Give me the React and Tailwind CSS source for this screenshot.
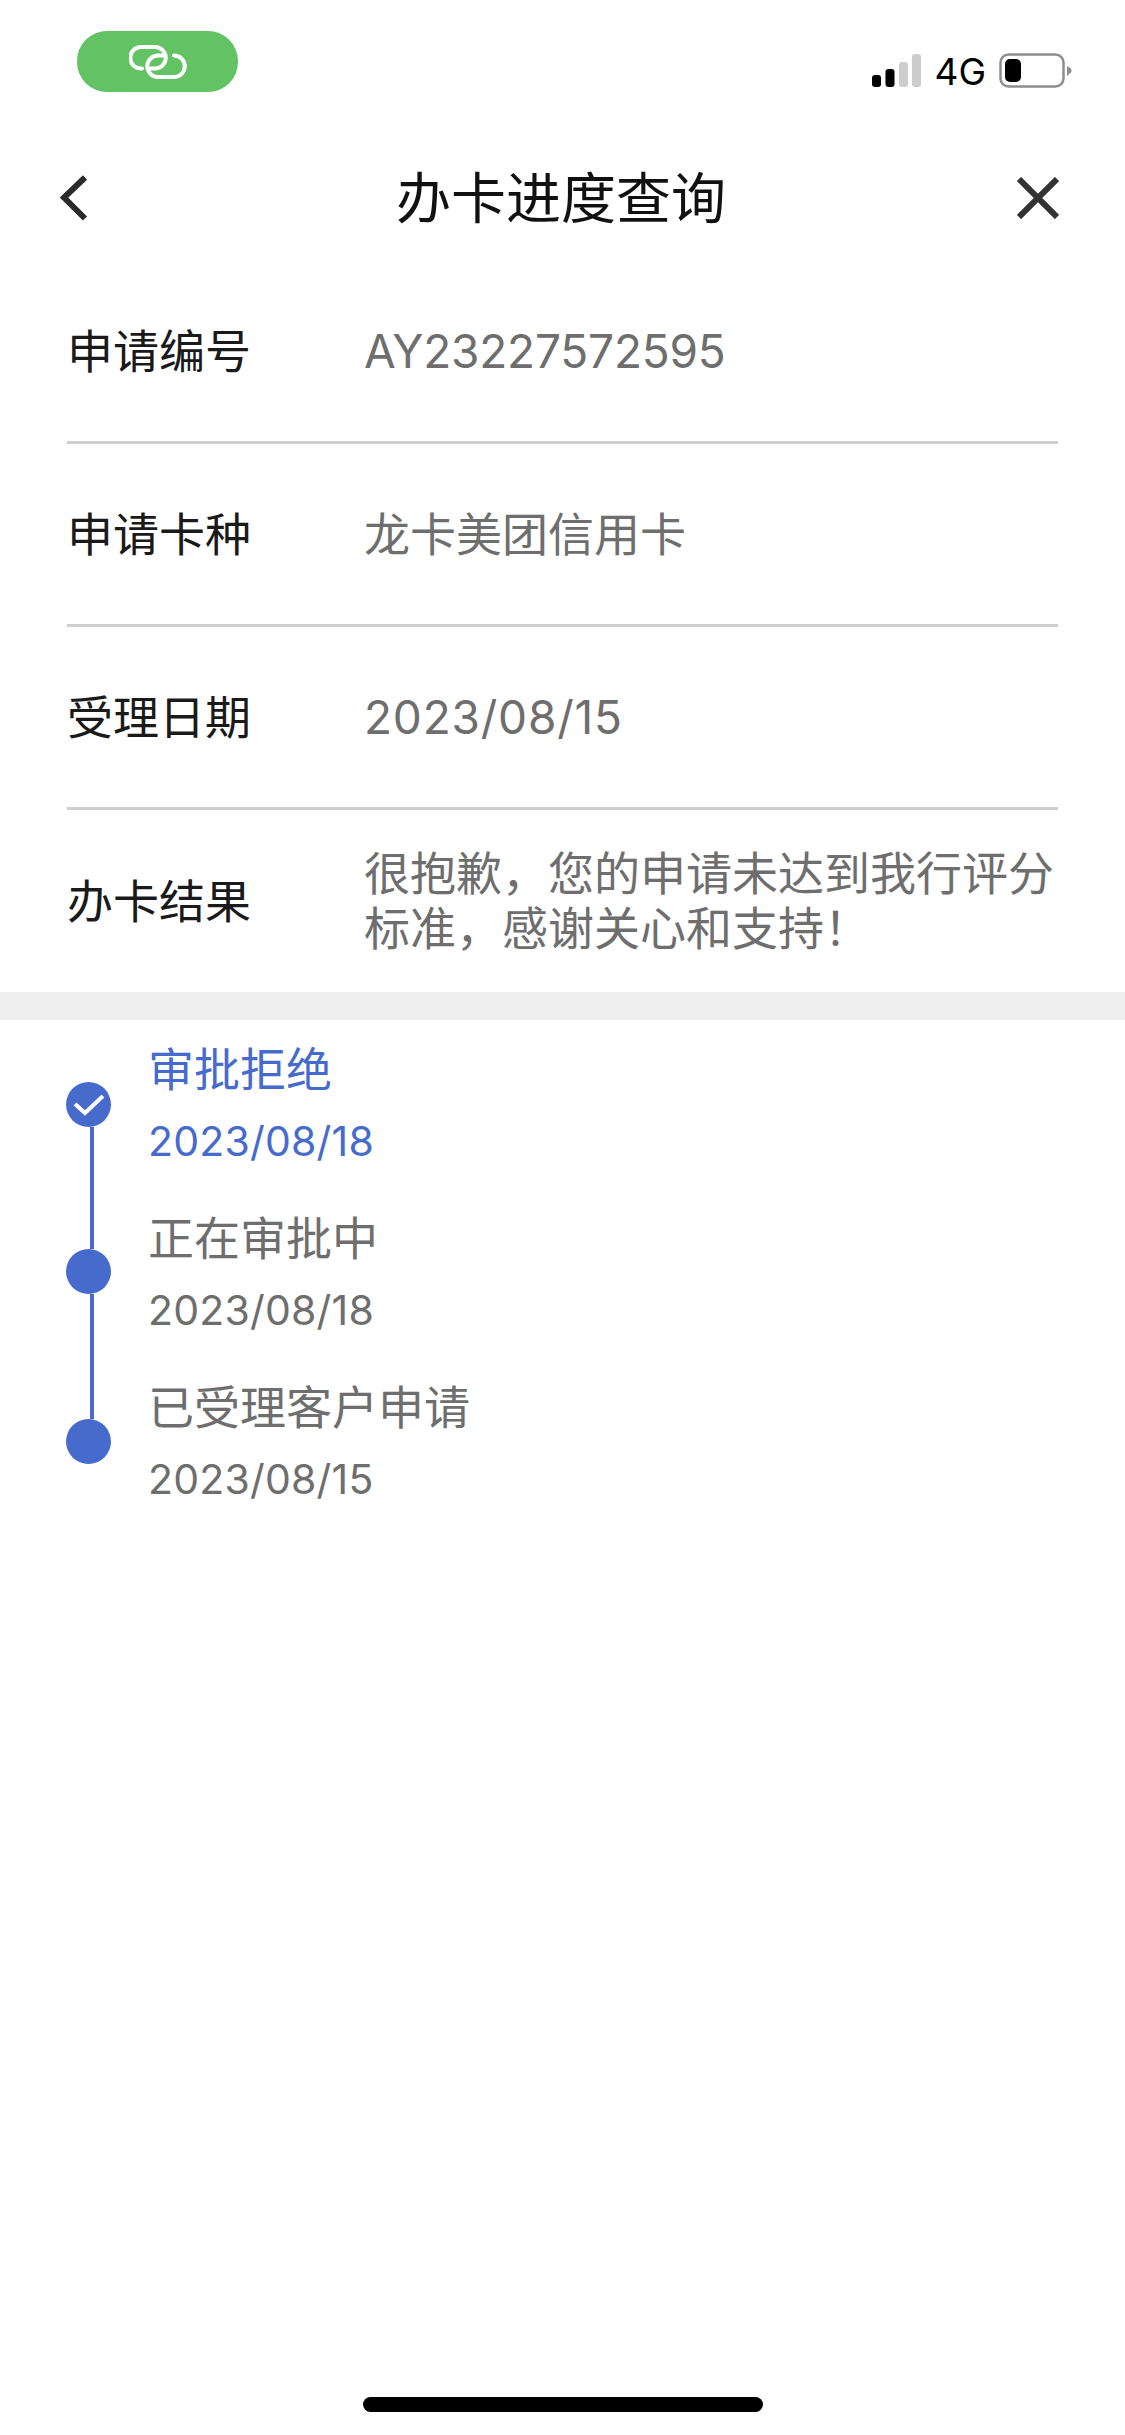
const cjk = "font-['Inter','Noto_Sans_CJK_SC',sans-serif]";

function LinkIcon() {
  return (
    <svg width="58" height="34" viewBox="0 0 58 34" fill="none" stroke="#fff" strokeWidth="4" strokeLinecap="round">
      <path d="M13 23.5H12A10.7 10.7 0 0 1 12 2H26A10.7 10.7 0 0 1 26 23.5H21" />
      <path d="M45 10.5A10.7 10.7 0 0 1 45 32H29A10.7 10.7 0 0 1 29 10.5H35" />
    </svg>
  );
}

function Signal() {
  return (
    <svg width="49" height="34" viewBox="0 0 49 34">
      <rect x="0" y="21" width="9" height="12" rx="3" fill="#000" />
      <rect x="13.500" y="15" width="9" height="18" rx="3" fill="#000" />
      <rect x="27" y="8" width="9" height="25" rx="3" fill="#cdcdcd" />
      <rect x="40" y="0" width="9" height="33" rx="3" fill="#cdcdcd" />
    </svg>
  );
}

function Battery() {
  return (
    <svg width="73" height="36" viewBox="0 0 73 36">
      <rect x="1.500" y="1.500" width="63" height="32" rx="8" fill="none" stroke="#8e8e8e" strokeWidth="2.500" />
      <rect x="6" y="6" width="16" height="23" rx="5" fill="#000" />
      <path d="M68 13L72 15.500Q73 17.500 72 19.500L68 23Z" fill="#8e8e8e" />
    </svg>
  );
}

function InfoRow({ label, value, last, valueClass = "" }) {
  return (
    <div className={`flex items-center ${last ? "h-[182px]" : "h-[183px] border-b-[3px] border-[#cfcfcf]"}`}>
      <div className="w-[297px] shrink-0 text-[#1a1a1a]">{label}</div>
      <div className={`text-[#6e6e6e] leading-[55px] ${valueClass}`}>{value}</div>
    </div>
  );
}

export default function App() {
  const rows = [
    { label: "申请编号", value: "AY23227572595", valueClass: "tracking-[-0.2px]" },
    { label: "申请卡种", value: "龙卡美团信用卡" },
    { label: "受理日期", value: "2023/08/15", valueClass: "tracking-[0.8px]" },
  ];
  const steps = [
    { title: "审批拒绝", date: "2023/08/18", active: true },
    { title: "正在审批中", date: "2023/08/18" },
    { title: "已受理客户申请", date: "2023/08/15" },
  ];

  return (
    <div className={`h-[2435px] bg-white flex flex-col overflow-hidden ${cjk}`}>
      {/* status bar */}
      <div className="flex justify-between pl-[77px] pr-[53px] pt-[31px]">
        <div className="w-[161px] h-[61px] rounded-[30px] bg-[#62c264] flex items-center justify-center">
          <LinkIcon />
        </div>
        <div className="flex items-center gap-[13px] h-[34px] mt-[23px]">
          <Signal />
          <span className="text-[37px] leading-none text-black">4G</span>
          <Battery />
        </div>
      </div>

      {/* nav */}
      <div className="flex items-center justify-between h-[84px] mt-[64px] pl-[60px] pr-[66px]">
        <div className="w-[42px]">
          <svg width="28" height="46" viewBox="0 0 28 46" fill="none" stroke="#2b2b2b" strokeWidth="6">
            <path d="M25 2.500L4 22.500L25 43.500" />
          </svg>
        </div>
        <div className="text-[55px] text-[#111] ml-[3px]">办卡进度查询</div>
        <svg width="42" height="42" viewBox="0 0 42 42" fill="none" stroke="#333" strokeWidth="6">
          <path d="M2 2L40 40M40 2L2 40" />
        </svg>
      </div>

      {/* info rows */}
      <div className="px-[67px] mt-[21px] text-[46px]">
        {rows.map((r) => (
          <InfoRow key={r.label} {...r} />
        ))}
        <InfoRow last label="办卡结果" value={<>很抱歉，您的申请未达到我行评分<br />标准，感谢关心和支持！</>} />
      </div>

      <div className="h-[28px] bg-[#eeeeee]" />

      {/* progress */}
      <div className="flex pl-[66px]">
        <div className="w-[45px] pt-[62px] flex flex-col items-center shrink-0">
          <div className="w-[45px] h-[45px] rounded-full bg-[#466bcd] flex items-center justify-center">
            <svg width="32" height="24" viewBox="0 0 32 24" fill="none" stroke="#fff" strokeWidth="4">
              <path d="M2 11L12 20L30 3" />
            </svg>
          </div>
          <div className="w-[4px] h-[122px] bg-[#466bcd] ml-[6px]" />
          <div className="w-[45px] h-[45px] rounded-full bg-[#466bcd]" />
          <div className="w-[4px] h-[125px] bg-[#466bcd] ml-[6px]" />
          <div className="w-[45px] h-[45px] rounded-full bg-[#466bcd]" />
        </div>
        <div className="pl-[37px] pt-[18px]">
          {steps.map((s) => (
            <div key={s.title} className={`h-[169px] ${s.active ? "text-[#466bcd]" : "text-[#6e6e6e]"}`}>
              <div className="text-[46px] leading-[63px]">{s.title}</div>
              <div className="text-[41px] leading-[80px] tracking-[0.2px]">{s.date}</div>
            </div>
          ))}
        </div>
      </div>

      {/* home indicator */}
      <div className="mt-auto mb-[23px] mx-auto w-[400px] h-[15px] rounded-full bg-black" />
    </div>
  );
}
